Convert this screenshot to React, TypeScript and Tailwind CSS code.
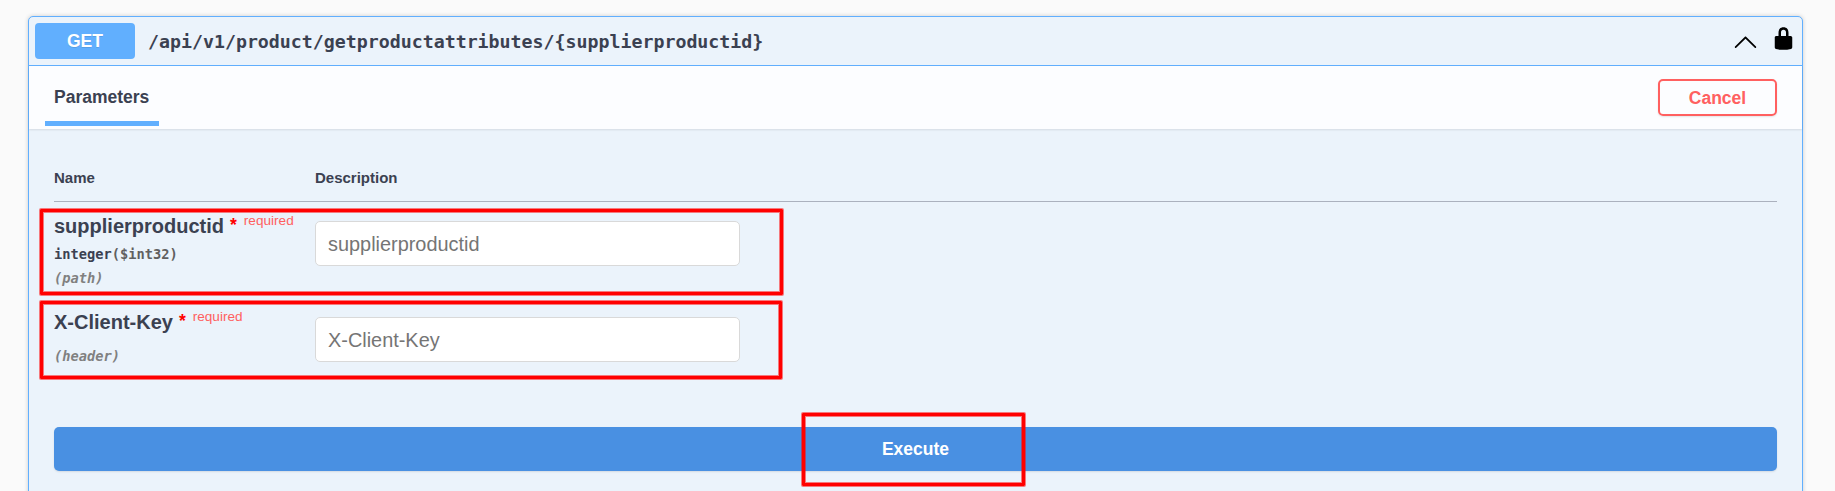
import React from 'react';

const mono = "font-['DejaVu_Sans_Mono',monospace]";

type Param = {
  name: string;
  location: string;
  type?: string;
  format?: string;
};

function ChevronUp() {
  return (
    <svg width="25" height="25" viewBox="0 0 20 20" aria-hidden="true">
      <path d="M 17.418 14.908 C 17.69 15.176 18.127 15.176 18.397 14.908 C 18.667 14.64 18.668 14.207 18.397 13.939 L 10.489 6.109 C 10.219 5.841 9.782 5.841 9.51 6.109 L 1.602 13.939 C 1.332 14.207 1.332 14.64 1.602 14.908 C 1.873 15.176 2.311 15.176 2.581 14.908 L 10 7.767 L 17.418 14.908 Z" />
    </svg>
  );
}

function Lock() {
  return (
    <svg width="25" height="25" viewBox="0 0 20 20" aria-hidden="true">
      <path d="M15.8 8H14V5.6C14 2.703 12.665 1 10 1 7.334 1 6 2.703 6 5.6V8H4c-.553 0-1 .646-1 1.199V17c0 .549.428 1.139.951 1.307l1.197.387C5.672 18.861 6.55 19 7.1 19h5.8c.549 0 1.428-.139 1.951-.307l1.196-.387c.524-.167.953-.757.953-1.306V9.199C17 8.646 16.352 8 15.8 8zM12 8H8V5.199C8 3.754 8.797 3 10 3c1.203 0 2 .754 2 2.199V8z" />
    </svg>
  );
}

function ParamRow({ param, className }: { param: Param; className: string }) {
  return (
    <div className={`flex ${className}`}>
      <div className="w-[261px] shrink-0">
        <div className="flex h-[28px] items-start whitespace-nowrap text-[20px] font-bold leading-[28px]">
          {param.name}
          <span className="ml-[6px] text-[17.5px] font-bold leading-[27px] text-[#f00]">*</span>
          <span className="ml-[7px] text-[13.6px] font-normal leading-[18px] text-[#ff6060]">required</span>
        </div>
        {param.type && (
          <div className={`${mono} mt-[5px] h-[19px] text-[13.7px] font-bold leading-[19px]`}>
            {param.type}
            <span className="text-[#606060]">({param.format})</span>
          </div>
        )}
        <div
          className={`${mono} text-[13.7px] font-bold italic leading-[19px] text-[#808080] ${
            param.type ? 'mt-[5px]' : 'mt-[11px]'
          }`}
        >
          ({param.location})
        </div>
      </div>
      <input
        className="mt-[9px] h-[45px] w-[425px] rounded-[5px] border border-[#d9d9d9] bg-white px-[12px] pt-px text-[19.9px] text-[#3b4151] outline-none placeholder:text-[#757575]"
        placeholder={param.name}
      />
    </div>
  );
}

function Highlight({ className }: { className: string }) {
  return (
    <div
      className={`pointer-events-none absolute rounded-[1px] border-[3px] border-[#f00] shadow-[0_0_0_1px_rgba(255,0,0,0.5),inset_0_0_0_1px_rgba(255,0,0,0.5)] ${className}`}
    />
  );
}

export default function App() {
  return (
    <div className="relative h-[491px] overflow-hidden bg-[#fafafa] pl-[28px] pr-[32px] pt-[16px] font-['Liberation_Sans',Arial,sans-serif] text-[#3b4151]">
      <section className="h-[500px] rounded-[5px] border border-[#61affe] bg-[#ebf3fb] shadow-[0_0_4px_rgba(0,0,0,0.19)]">
        <header className="flex h-[49px] items-start border-b border-[#61affe] pl-[6px] pr-[6px]">
          <span className="mt-[6px] flex h-[36px] w-[100px] items-center justify-center rounded-[4px] bg-[#61affe] text-[17.5px] font-bold text-white [text-shadow:0_1px_0_rgba(0,0,0,0.1)]">
            GET
          </span>
          <span className={`${mono} ml-[13px] mt-[12px] text-[18.25px] font-bold leading-[26px]`}>
            {'/api/v1/product/getproductattributes/{supplierproductid}'}
          </span>
          <button className="ml-auto mt-[12px]">
            <ChevronUp />
          </button>
          <button className="ml-[13px] mt-[9px]">
            <Lock />
          </button>
        </header>

        <div className="flex h-[63px] items-start justify-between bg-[#fcfdff] pl-[16px] pr-[25px] shadow-[0_1px_2px_rgba(0,0,0,0.1)]">
          <h4 className="mt-[11px] h-[49px] w-[114px] border-b-[5px] border-[#61affe] pl-[9px] text-[17.5px] font-bold leading-[40px]">
            Parameters
          </h4>
          <button className="mt-[13px] h-[37px] w-[119px] rounded-[5px] border-2 border-[#ff6060] text-[17.5px] font-bold leading-[35px] text-[#ff6060] shadow-[0_1px_2px_rgba(0,0,0,0.1)]">
            Cancel
          </button>
        </div>

        <div className="pl-[25px] pr-[25px] pt-[39px]">
          <div className="flex h-[34px] border-b border-[#abb1be] text-[15px] font-bold leading-[20px]">
            <span className="w-[261px]">Name</span>
            <span>Description</span>
          </div>
          <ParamRow
            className="mt-[10px] h-[96px]"
            param={{ name: 'supplierproductid', type: 'integer', format: '$int32', location: 'path' }}
          />
          <ParamRow className="h-[110px]" param={{ name: 'X-Client-Key', location: 'header' }} />
          <button className="mt-[9px] h-[44px] w-full rounded-[5px] bg-[#4990e2] text-[17.5px] font-bold leading-[44px] text-white shadow-[0_1px_2px_rgba(0,0,0,0.1)]">
            Execute
          </button>
        </div>
      </section>

      <Highlight className="left-[40px] top-[209px] h-[86px] w-[743px]" />
      <Highlight className="left-[40px] top-[301px] h-[78px] w-[742px]" />
      <Highlight className="left-[802px] top-[413px] h-[73px] w-[223px]" />
    </div>
  );
}
